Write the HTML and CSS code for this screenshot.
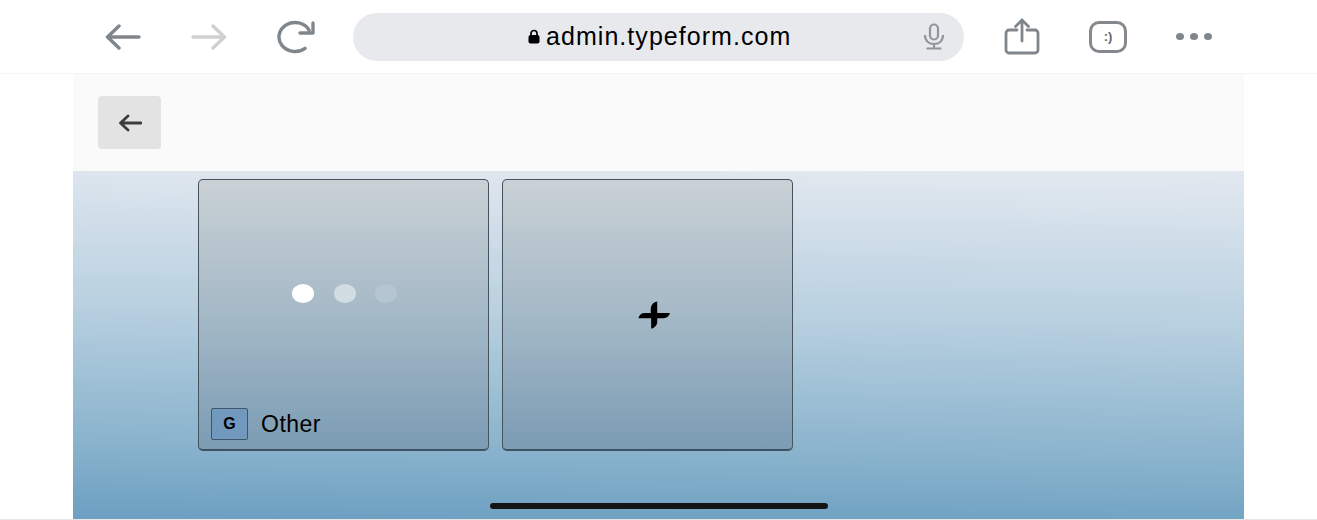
FILE: index.html
```html
<!DOCTYPE html>
<html lang="en">
<head>
<meta charset="UTF-8" />
<meta name="viewport" content="width=device-width, initial-scale=1" />
<title>admin.typeform.com</title>
<link rel="stylesheet" href="styles.css">
</head>
<body>
  <header class="toolbar">
    <svg class="icon icon-back" viewBox="0 0 36 26"><path d="M34 13H3M14 2 2.500 13 14 24" /></svg>
    <svg class="icon icon-forward" viewBox="0 0 36 26"><path d="M2 13h31M22 2l11.500 11L22 24" /></svg>
    <svg class="icon icon-reload" viewBox="0 0 40 35"><path d="M32 11A16 14.500 0 1 0 28 29.300M23 14H36V4" /></svg>
    <div class="address">
      <svg class="lock" viewBox="0 0 12 15"><path d="M3 7V4.500a3 3 0 0 1 6 0V7" /><rect x="0.500" y="6" width="11" height="8.500" rx="2" /></svg>
      <span class="url">admin.typeform.com</span>
      <svg class="mic" viewBox="0 0 24 27"><rect x="8" y="1.500" width="8" height="15" rx="4" /><path d="M3 12c0 6 4 9 9 9s9-3 9-9M12 21v4.500M4.500 25.500h15" /></svg>
    </div>
    <svg class="icon icon-share" viewBox="0 0 36 37"><path d="M13 12H5a3 3 0 0 0-3 3v17a3 3 0 0 0 3 3h26a3 3 0 0 0 3-3V15a3 3 0 0 0-3-3h-8M18 23V2M11.500 8.500 18 2l6.500 6.500" /></svg>
    <div class="tabs">:)</div>
    <div class="more"><span></span><span></span><span></span></div>
  </header>

  <main class="page">
    <div class="page-head">
      <button class="back-btn">
        <svg viewBox="0 0 24 18"><path d="M23 9H3M10 2 2.500 9 10 16" /></svg>
      </button>
    </div>
    <div class="stage">
      <div class="card">
        <div class="dots">
          <span class="dot"></span>
          <span class="dot dot-mid"></span>
          <span class="dot dot-low"></span>
        </div>
        <div class="card-label">
          <span class="key">G</span>
          <span class="label-text">Other</span>
        </div>
      </div>
      <div class="card card-add">
        <svg class="plus" viewBox="114 62 95 82"><path d="M115 113Q119 97 135 97H152V82Q155 66 171 63V97H209Q205 111 190 113H171V126Q168 140 153 144V113Z" /></svg>
      </div>
      <div class="home-bar"></div>
    </div>
  </main>
</body>
</html>
```
FILE: styles.css
```css
html, body {
  margin: 0;
  padding: 0;
  height: 520px;
  overflow: hidden;
  background: #fff;
  font-family: "Liberation Sans", Arial, sans-serif;
  color: #000;
}
body {
  box-sizing: border-box;
  border-bottom: 1px solid #e6e6e6;
}
svg {
  display: block;
  flex: none;
}
.toolbar {
  display: flex;
  align-items: center;
  box-sizing: border-box;
  height: 74px;
  padding-left: 105px;
  border-bottom: 1px solid #f5f5f5;
}
.icon path {
  fill: none;
  stroke: #80878c;
  stroke-width: 3.4;
  stroke-linecap: round;
  stroke-linejoin: round;
}
.icon-back {
  width: 36px;
  height: 26px;
}
.icon-forward {
  width: 36px;
  height: 26px;
  margin-left: 50px;
}
.icon-forward path {
  stroke: #cfd0d1;
}
.icon-reload {
  width: 40px;
  height: 35px;
  margin-left: 50px;
}
.address {
  display: flex;
  align-items: center;
  width: 611px;
  height: 48px;
  margin-left: 36px;
  padding-left: 175px;
  box-sizing: border-box;
  background: #e8e9ed;
  border-radius: 24px;
}
.lock {
  width: 12px;
  height: 15px;
}
.lock path {
  fill: none;
  stroke: #000;
  stroke-width: 1.7;
}
.url {
  margin-left: 6px;
  font-size: 25px;
  letter-spacing: 1.05px;
  white-space: nowrap;
}
.mic {
  width: 24px;
  height: 27px;
  margin-left: 131px;
}
.mic rect, .mic path {
  fill: none;
  stroke: #90959a;
  stroke-width: 2.2;
}
.icon-share {
  width: 36px;
  height: 37px;
  margin-left: 40px;
}
.icon-share path {
  stroke-width: 2.8;
}
.tabs {
  display: flex;
  align-items: center;
  justify-content: center;
  box-sizing: border-box;
  width: 38px;
  height: 32px;
  margin-left: 49px;
  border: 3px solid #85898d;
  border-radius: 10px;
  font-size: 13px;
  font-weight: 700;
  color: #66696d;
}
.more {
  display: flex;
  gap: 6px;
  margin-left: 49px;
}
.more span {
  width: 8px;
  height: 7px;
  border-radius: 50%;
  background: #80868b;
}
.page {
  width: 1171px;
  height: 445px;
  margin-left: 73px;
}
.page-head {
  display: flex;
  align-items: center;
  height: 97px;
  padding-left: 25px;
  background: #fafafa;
}
.back-btn {
  display: flex;
  align-items: center;
  justify-content: center;
  width: 63px;
  height: 53px;
  padding: 0;
  border: 0;
  border-radius: 4px;
  background: #e3e3e3;
}
.back-btn svg {
  width: 24px;
  height: 18px;
}
.back-btn path {
  fill: none;
  stroke: #3d3d3d;
  stroke-width: 2.8;
  stroke-linecap: round;
  stroke-linejoin: round;
}
.stage {
  position: relative;
  display: flex;
  align-items: flex-start;
  gap: 13px;
  box-sizing: border-box;
  height: 348px;
  padding: 8px 0 0 125px;
  background: linear-gradient(181deg, #e3e9f0 0%, #b8d0e0 42%, #88b2cc 80%, #6c9fc1 100%);
}
.card {
  display: flex;
  flex-direction: column;
  justify-content: space-between;
  box-sizing: border-box;
  width: 291px;
  height: 272px;
  padding: 104px 0 9px 12px;
  border: 1px solid #46535d;
  border-bottom: 2px solid #3f5264;
  border-radius: 5px;
  background: linear-gradient(180deg, #cad1d6 0%, #a3b8c6 52%, #7b9cb4 100%);
}
.dots {
  display: flex;
  gap: 19.5px;
  padding-left: 81px;
}
.dot {
  width: 22px;
  height: 19px;
  border-radius: 50%;
  background: #fff;
}
.dot-mid {
  background: #d2dce3;
}
.dot-low {
  background: #b5c6d2;
}
.card-label {
  display: flex;
  align-items: center;
  gap: 13px;
}
.key {
  display: flex;
  align-items: center;
  justify-content: center;
  box-sizing: border-box;
  width: 37px;
  height: 32px;
  border: 1px solid #3f5568;
  border-radius: 2px;
  background: #7099bd;
  font-size: 16px;
  font-weight: 700;
}
.label-text {
  font-size: 23px;
  letter-spacing: 0.5px;
}
.card-add {
  align-items: center;
  justify-content: center;
  padding: 0 0 0 12px;
}
.plus {
  width: 32px;
  height: 28px;
}
.home-bar {
  position: absolute;
  left: 417px;
  bottom: 10px;
  width: 338px;
  height: 6px;
  border-radius: 3px;
  background: #141414;
}
```
